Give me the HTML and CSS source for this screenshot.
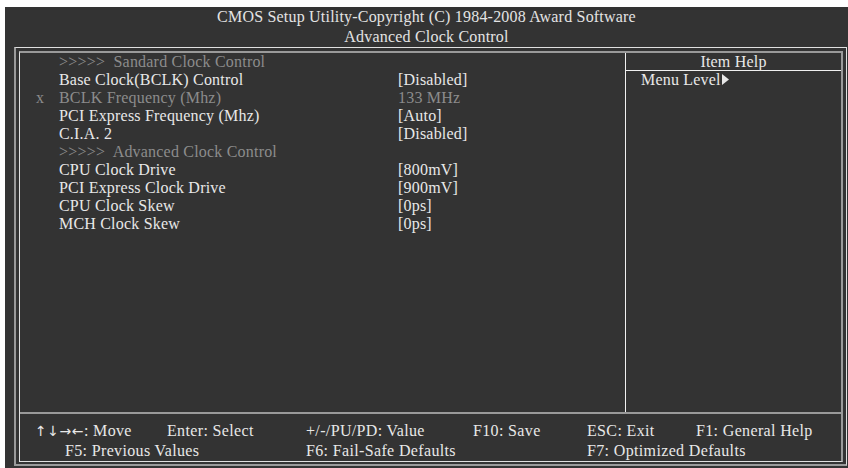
FILE: index.html
```html
<!DOCTYPE html>
<html lang="en">
<head>
    <meta charset="UTF-8">
    <title>Advanced Clock Control</title>
    <link rel="stylesheet" href="styles.css">
</head>
<body>

<div class="screen">
    <header class="title">
        <div>CMOS Setup Utility-Copyright (C) 1984-2008 Award Software</div>
        <div>Advanced Clock Control</div>
    </header>

    <div class="frame">
        <div class="inner">
            <div class="main">
                <div class="items">
                    <div class="row dim"><span class="mark"></span><span class="label">&gt;&gt;&gt;&gt;&gt;&nbsp; Sandard Clock Control</span><span class="value"></span></div>
                    <div class="row"><span class="mark"></span><span class="label">Base Clock(BCLK) Control</span><span class="value">[Disabled]</span></div>
                    <div class="row dim"><span class="mark">x</span><span class="label">BCLK Frequency (Mhz)</span><span class="value">133 MHz</span></div>
                    <div class="row"><span class="mark"></span><span class="label">PCI Express Frequency (Mhz)</span><span class="value">[Auto]</span></div>
                    <div class="row"><span class="mark"></span><span class="label">C.I.A. 2</span><span class="value">[Disabled]</span></div>
                    <div class="row dim"><span class="mark"></span><span class="label">&gt;&gt;&gt;&gt;&gt;&nbsp; Advanced Clock Control</span><span class="value"></span></div>
                    <div class="row"><span class="mark"></span><span class="label">CPU Clock Drive</span><span class="value">[800mV]</span></div>
                    <div class="row"><span class="mark"></span><span class="label">PCI Express Clock Drive</span><span class="value">[900mV]</span></div>
                    <div class="row"><span class="mark"></span><span class="label">CPU Clock Skew</span><span class="value">[0ps]</span></div>
                    <div class="row"><span class="mark"></span><span class="label">MCH Clock Skew</span><span class="value">[0ps]</span></div>
                </div>
                <div class="help">
                    <div class="help-title">Item Help</div>
                    <div class="help-text">Menu Level<svg class="tri" width="7" height="11" viewBox="0 0 7 11"><path d="M0 0 L7 5.5 L0 11 Z" fill="#e8e8e8"/></svg></div>
                </div>
            </div>
            <footer class="keys">
                <span><span class="arrows">↑↓→←</span>: Move</span>
                <span>Enter: Select</span>
                <span>+/-/PU/PD: Value</span>
                <span>F10: Save</span>
                <span>ESC: Exit</span>
                <span>F1: General Help</span>
                <span class="f5">F5: Previous Values</span>
                <span>F6: Fail-Safe Defaults</span>
                <span></span>
                <span class="f7">F7: Optimized Defaults</span>
            </footer>
        </div>
    </div>
</div>

</body>
</html>
```

FILE: styles.css
```css
body {
    margin: 7px 0 0 5px;
    background-color: #ffffff;
    font-family: "Liberation Serif", "Times New Roman", serif;
    font-size: 16px;
    letter-spacing: 0.2px;
    color: #e8e8e8;
}
.screen {
    background-color: #333333;
    height: 461px;
    width: 843px;
    overflow: hidden;
}
.title {
    height: 40px;
    line-height: 20px;
    text-align: center;
    color: #e4e4e4;
}
.frame {
    margin-left: 9px;
    width: 833px;
    height: 419px;
    box-sizing: border-box;
    border-top: 1px solid #e0e0e0;
    border-left: 2px solid #9a9a9a;
    border-right: 1px solid #e0e0e0;
    border-bottom: 2px solid #9a9a9a;
    padding: 3px 3px 2px 3px;
}
.inner {
    height: 100%;
    box-sizing: border-box;
    border-top: 2px solid #9a9a9a;
    border-left: 1px solid #e0e0e0;
    border-right: 2px solid #9a9a9a;
    border-bottom: 1px solid #e0e0e0;
    display: flex;
    flex-direction: column;
}
.main {
    display: flex;
    height: 359px;
    border-bottom: 2px solid #9a9a9a;
}
.items {
    width: 605px;
    border-right: 1px solid #f0f0f0;
}
.row {
    display: grid;
    grid-template-columns: 39px 339px auto;
    height: 18px;
    line-height: 18px;
}
.mark {
    padding-left: 16px;
}
.dim {
    color: #8c8c8c;
}
.help {
    flex: 1;
}
.help-title {
    height: 17px;
    line-height: 18px;
    text-align: center;
    border-bottom: 1px solid #f0f0f0;
}
.help-text {
    line-height: 18px;
    padding-left: 15px;
}
.tri {
    margin-left: 1px;
}
.keys {
    display: grid;
    grid-template-columns: 132px 139px 167px 114px 109px auto;
    padding: 7px 0 0 15px;
    line-height: 19px;
    letter-spacing: 0.35px;
}
.arrows {
    font-family: "DejaVu Sans", sans-serif;
    font-size: 14px;
    letter-spacing: 0.5px;
}
.f5 {
    grid-column: 1 / 3;
    padding-left: 30px;
}
.f7 {
    grid-column: 5 / 7;
}
```
